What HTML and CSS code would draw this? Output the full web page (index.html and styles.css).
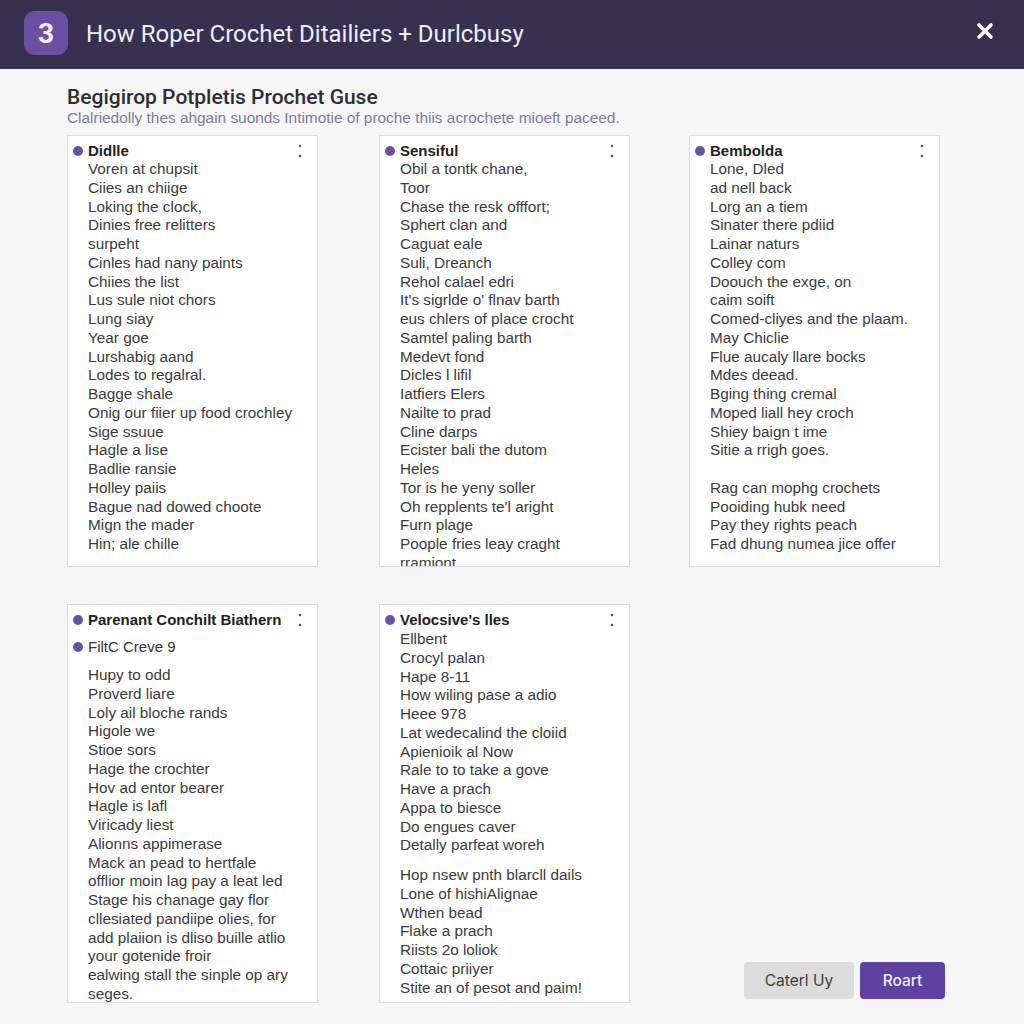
FILE: index.html
```html
<!DOCTYPE html>
<html lang="en">
<head>
  <meta charset="UTF-8">
  <meta name="viewport" content="width=device-width, initial-scale=1.0">
  <title>How Roper Crochet Ditailiers + Durlcbusy</title>
  <link rel="stylesheet" href="styles.css">
</head>
<body>
  <header class="top-bar">
    <div class="top-left">
      <div class="step-badge">3</div>
      <h1>How Roper Crochet Ditailiers + Durlcbusy</h1>
    </div>
    <svg class="close-icon" width="18" height="18" viewBox="0 0 18 18">
      <path d="M3 3 L15 15 M15 3 L3 15" stroke="#fff" stroke-width="3.6" stroke-linecap="round"/>
    </svg>
  </header>

  <main class="content">
    <h2>Begigirop Potpletis Prochet Guse</h2>
    <p class="subtitle">Clalriedolly thes ahgain suonds Intimotie of proche thiis acrochete mioeft paceed.</p>

    <div class="card-grid">
      <section class="card row-one">
        <div class="card-head">
          <span class="dot"></span><span class="card-title">Didlle</span>
          <svg class="more" width="4" height="14" viewBox="0 0 4 14"><circle cx="2" cy="2" r="1.3"/><circle cx="2" cy="12" r="1.3"/></svg>
        </div>
        <ul class="lines">
          <li>Voren at chupsit</li>
          <li>Ciies an chiige</li>
          <li>Loking the clock,</li>
          <li>Dinies free relitters</li>
          <li>surpeht</li>
          <li>Cinles had nany paints</li>
          <li>Chiies the list</li>
          <li>Lus sule niot chors</li>
          <li>Lung siay</li>
          <li>Year goe</li>
          <li>Lurshabig aand</li>
          <li>Lodes to regalral.</li>
          <li>Bagge shale</li>
          <li>Onig our fiier up food crochley</li>
          <li>Sige ssuue</li>
          <li>Hagle a lise</li>
          <li>Badlie ransie</li>
          <li>Holley paiis</li>
          <li>Bague nad dowed choote</li>
          <li>Mign the mader</li>
          <li>Hin; ale chille</li>
        </ul>
      </section>

      <section class="card row-one card-mid">
        <div class="card-head">
          <span class="dot"></span><span class="card-title">Sensiful</span>
          <svg class="more" width="4" height="14" viewBox="0 0 4 14"><circle cx="2" cy="2" r="1.3"/><circle cx="2" cy="12" r="1.3"/></svg>
        </div>
        <ul class="lines">
          <li>Obil a tontk chane,</li>
          <li>Toor</li>
          <li>Chase the resk offfort;</li>
          <li>Sphert clan and</li>
          <li>Caguat eale</li>
          <li>Suli, Dreanch</li>
          <li>Rehol calael edri</li>
          <li>It's sigrlde o' flnav barth</li>
          <li>eus chlers of place crocht</li>
          <li>Samtel paling barth</li>
          <li>Medevt fond</li>
          <li>Dicles l lifil</li>
          <li>Iatfiers Elers</li>
          <li>Nailte to prad</li>
          <li>Cline darps</li>
          <li>Ecister bali the dutom</li>
          <li>Heles</li>
          <li>Tor is he yeny soller</li>
          <li>Oh repplents te'l aright</li>
          <li>Furn plage</li>
          <li>Poople fries leay craght</li>
          <li>rramiont.</li>
        </ul>
      </section>

      <section class="card row-one">
        <div class="card-head">
          <span class="dot"></span><span class="card-title">Bembolda</span>
          <svg class="more" width="4" height="14" viewBox="0 0 4 14"><circle cx="2" cy="2" r="1.3"/><circle cx="2" cy="12" r="1.3"/></svg>
        </div>
        <ul class="lines">
          <li>Lone, Dled</li>
          <li>ad nell back</li>
          <li>Lorg an a tiem</li>
          <li>Sinater there pdiid</li>
          <li>Lainar naturs</li>
          <li>Colley com</li>
          <li>Doouch the exge, on</li>
          <li>caim soift</li>
          <li>Comed-cliyes and the plaam.</li>
          <li>May Chiclie</li>
          <li>Flue aucaly llare bocks</li>
          <li>Mdes deead.</li>
          <li>Bging thing cremal</li>
          <li>Moped liall hey croch</li>
          <li>Shiey baign t ime</li>
          <li>Sitie a rrigh goes.</li>
          <li class="blank"></li>
          <li>Rag can mophg crochets</li>
          <li>Pooiding hubk need</li>
          <li>Pay they rights peach</li>
          <li>Fad dhung numea jice offer</li>
        </ul>
      </section>

      <section class="card row-two">
        <div class="card-head">
          <span class="dot"></span><span class="card-title">Parenant Conchilt Biathern</span>
          <svg class="more" width="4" height="14" viewBox="0 0 4 14"><circle cx="2" cy="2" r="1.3"/><circle cx="2" cy="12" r="1.3"/></svg>
        </div>
        <div class="card-sub">
          <span class="dot"></span><span class="card-title">FiltC Creve 9</span>
        </div>
        <ul class="lines">
          <li>Hupy to odd</li>
          <li>Proverd liare</li>
          <li>Loly ail bloche rands</li>
          <li>Higole we</li>
          <li>Stioe sors</li>
          <li>Hage the crochter</li>
          <li>Hov ad entor bearer</li>
          <li>Hagle is lafl</li>
          <li>Viricady liest</li>
          <li>Alionns appimerase</li>
          <li>Mack an pead to hertfale</li>
          <li>offlior moin lag pay a leat led</li>
          <li>Stage his chanage gay flor</li>
          <li>cllesiated pandiipe olies, for</li>
          <li>add plaiion is dliso buille atlio</li>
          <li>your gotenide froir</li>
          <li>ealwing stall the sinple op ary</li>
          <li>seges.</li>
        </ul>
      </section>

      <section class="card row-two card-mid">
        <div class="card-head">
          <span class="dot"></span><span class="card-title">Velocsive's lles</span>
          <svg class="more" width="4" height="14" viewBox="0 0 4 14"><circle cx="2" cy="2" r="1.3"/><circle cx="2" cy="12" r="1.3"/></svg>
        </div>
        <ul class="lines">
          <li>Ellbent</li>
          <li>Crocyl palan</li>
          <li>Hape 8-11</li>
          <li>How wiling pase a adio</li>
          <li>Heee 978</li>
          <li>Lat wedecalind the cloiid</li>
          <li>Apienioik al Now</li>
          <li>Rale to to take a gove</li>
          <li>Have a prach</li>
          <li>Appa to biesce</li>
          <li>Do engues caver</li>
          <li>Detally parfeat woreh</li>
          <li class="gap-above">Hop nsew pnth blarcll dails</li>
          <li>Lone of hishiAlignae</li>
          <li>Wthen bead</li>
          <li>Flake a prach</li>
          <li>Riists 2o loliok</li>
          <li>Cottaic priiyer</li>
          <li>Stite an of pesot and paim!</li>
        </ul>
      </section>

      <div class="actions">
        <button class="btn btn-cancel" type="button">Caterl Uy</button>
        <button class="btn btn-main" type="button">Roart</button>
      </div>
    </div>
  </main>
</body>
</html>
```

FILE: styles.css
```css
body {
  margin: 0;
  font-family: "Liberation Sans", Arial, sans-serif;
  background-color: #f6f6f6;
  color: #333;
}
.top-bar {
  height: 69px;
  background-color: #37304f;
  display: flex;
  justify-content: space-between;
  align-items: center;
  padding: 0 30px 0 24px;
  box-sizing: border-box;
}
.top-left {
  display: flex;
  align-items: center;
  gap: 18px;
  margin-top: -3px;
}
.step-badge {
  width: 44px;
  height: 44px;
  border-radius: 11px;
  background-color: #6b4fa3;
  color: #f2eff8;
  font-family: Roboto, sans-serif;
  font-weight: 700;
  font-size: 28px;
  display: flex;
  justify-content: center;
  align-items: center;
}
.top-left h1 {
  margin: 0;
  padding-top: 2px;
  font-family: Roboto, sans-serif;
  font-size: 24px;
  font-weight: 400;
  color: #f0eef5;
}
.close-icon {
  margin-top: -7px;
}
.content {
  padding: 16px 84px 0 67px;
}
.content h2 {
  margin: 0;
  font-family: Roboto, sans-serif;
  font-size: 21px;
  line-height: 24px;
  font-weight: 500;
  color: #2d2d33;
}
.subtitle {
  margin: 0 0 9px;
  font-size: 15.4px;
  line-height: 17px;
  color: #7f7a9e;
}
.card-grid {
  display: grid;
  grid-template-columns: 251px 251px 251px;
  column-gap: 60px;
  row-gap: 37px;
}
.card {
  background: #fff;
  border: 1px solid #dcdcdc;
  box-sizing: border-box;
  overflow: hidden;
  padding: 6px 5px 0;
}
.card-mid {
  margin: 0 -1px 0 1px;
}
.row-one {
  height: 432px;
}
.row-two {
  height: 399px;
}
.card-head,
.card-sub {
  display: flex;
  align-items: center;
  gap: 5px;
  height: 18px;
  font-size: 15px;
}
.card-head {
  font-weight: 700;
  color: #222;
}
.card-sub {
  margin-top: 9px;
}
.card-title {
  flex: 1;
  padding-bottom: 2px;
}
.dot {
  width: 10px;
  height: 10px;
  border-radius: 50%;
  background-color: #6b4fa3;
}
.more {
  fill: #555;
  margin-right: 10px;
  margin-top: -1px;
}
.lines {
  list-style: none;
  margin: 0;
  padding: 0 0 0 15px;
  font-size: 15.3px;
  line-height: 18.75px;
  color: #3a3a3a;
}
.row-two .lines {
  margin-top: 1px;
}
.card-sub + .lines {
  margin-top: 10px;
}
.blank {
  height: 18.75px;
}
.gap-above {
  margin-top: 11px;
}
.actions {
  display: flex;
  justify-content: flex-end;
  align-items: flex-end;
  gap: 6px;
  padding-bottom: 4px;
  margin-right: -5px;
}
.btn {
  height: 37px;
  border: none;
  border-radius: 4px;
  font-family: Inter, sans-serif;
  font-size: 15.5px;
  cursor: pointer;
}
.btn-cancel {
  width: 110px;
  background-color: #dcdcdc;
  color: #3c3c3c;
}
.btn-main {
  width: 85px;
  background-color: #5f41a0;
  color: #eee;
  font-weight: 500;
}
```
